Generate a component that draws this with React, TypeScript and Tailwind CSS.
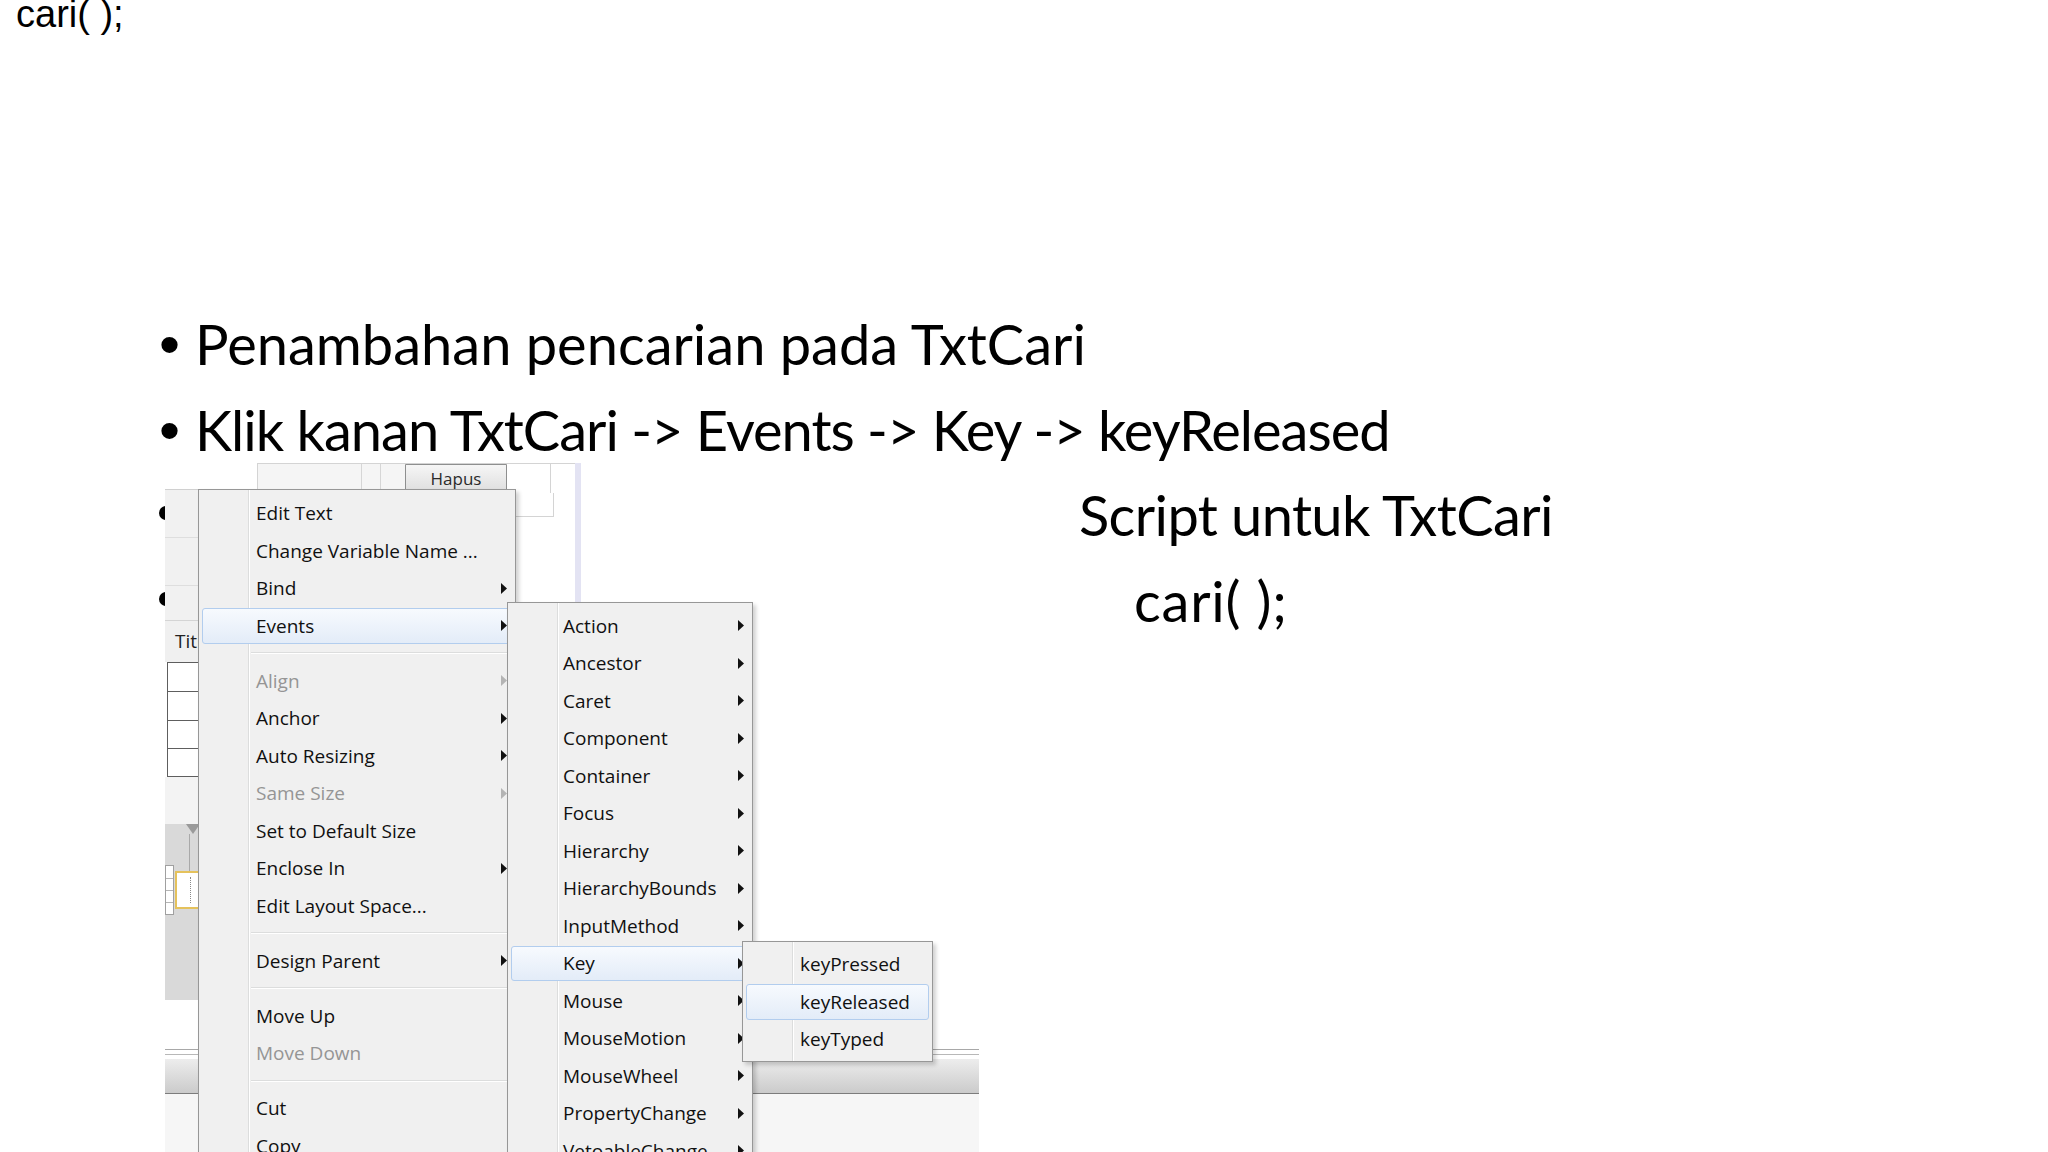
import React from "react";

type Item = { label: string; arrow?: boolean; disabled?: boolean; hl?: boolean } | "sep";

function Arrow({ disabled }: { disabled?: boolean }) {
  return (
    <svg width="6" height="11" viewBox="0 0 6 11" className="relative shrink-0">
      <path d="M0 0L6 5.5L0 11Z" fill={disabled ? "#b4b4b4" : "#111"} />
    </svg>
  );
}

function Menu({ items, className, textPad }: { items: Item[]; className: string; textPad: string }) {
  return (
    <div
      className={`absolute flex flex-col border border-[#979797] bg-[linear-gradient(to_right,#f0f0f0_49px,#dcdddd_49px,#dcdddd_50px,#ffffff_50px,#ffffff_51px,#f0f0f0_51px)] shadow-[3px_3px_4px_rgba(0,0,0,0.18)] font-['Open_Sans',sans-serif] text-[19px] ${className}`}
    >
      {items.map((it, i) =>
        it === "sep" ? (
          <div key={i} className="h-[17.5px] shrink-0 flex flex-col justify-center pl-[52px] pr-[2px]">
            <div className="h-px bg-[#dcdddd]" />
            <div className="h-px bg-white" />
          </div>
        ) : (
          <div key={i} className={`relative h-[37.5px] shrink-0 flex items-center pr-[8px] ${textPad}`}>
            {it.hl && (
              <div className="absolute top-[1px] bottom-[1px] left-[3px] right-[3px] rounded-[3px] border border-[#b2cdee] bg-linear-to-b from-[#f7fafe] to-[#e3ecf8]" />
            )}
            <span className={`relative flex-1 whitespace-nowrap ${it.disabled ? "text-[#959595]" : "text-[#101010]"}`}>
              {it.label}
            </span>
            {it.arrow && <Arrow disabled={it.disabled} />}
          </div>
        )
      )}
    </div>
  );
}

const mainItems: Item[] = [
  { label: "Edit Text" },
  { label: "Change Variable Name ..." },
  { label: "Bind", arrow: true },
  { label: "Events", arrow: true, hl: true },
  "sep",
  { label: "Align", arrow: true, disabled: true },
  { label: "Anchor", arrow: true },
  { label: "Auto Resizing", arrow: true },
  { label: "Same Size", arrow: true, disabled: true },
  { label: "Set to Default Size" },
  { label: "Enclose In", arrow: true },
  { label: "Edit Layout Space..." },
  "sep",
  { label: "Design Parent", arrow: true },
  "sep",
  { label: "Move Up" },
  { label: "Move Down", disabled: true },
  "sep",
  { label: "Cut" },
  { label: "Copy" },
  { label: "Paste" },
];

const eventItems: Item[] = [
  "Action",
  "Ancestor",
  "Caret",
  "Component",
  "Container",
  "Focus",
  "Hierarchy",
  "HierarchyBounds",
  "InputMethod",
  "Key",
  "Mouse",
  "MouseMotion",
  "MouseWheel",
  "PropertyChange",
  "VetoableChange",
].map((l) => ({ label: l, arrow: true, hl: l === "Key" }));

const keyItems: Item[] = [
  { label: "keyPressed" },
  { label: "keyReleased", hl: true },
  { label: "keyTyped" },
];

function LeftStrip() {
  return (
    <div className="w-[40px] shrink-0 flex flex-col">
      <div className="h-[26px] bg-white" />
      <div className="h-[131px] flex flex-col bg-[#f1f1f1] border-t border-[#d0d0d0]">
        <div className="h-[48px] border-b border-[#dedede]" />
        <div className="h-[48px] border-b border-[#dedede]" />
      </div>
      <div className="h-[42px] bg-[#f0f0f0] border-t border-[#d4d4d4] flex items-center pl-[10px] font-['Open_Sans',sans-serif] text-[19px] text-[#222] overflow-hidden whitespace-nowrap">
        Title
      </div>
      <div className="h-[115px] ml-[2px] bg-white border border-[#5e5e5e] flex flex-col">
        <div className="h-[29px] border-b border-[#5e5e5e]" />
        <div className="h-[29px] border-b border-[#5e5e5e]" />
        <div className="h-[28px] border-b border-[#5e5e5e]" />
      </div>
      <div className="h-[47px] bg-[#f3f3f3]" />
      <div className="h-[176px] bg-[#d9d9d9] flex flex-col">
        <div className="flex pl-[21px]">
          <svg width="14" height="10" viewBox="0 0 14 10">
            <path d="M0 0H14L7 10Z" fill="#9a9a9a" />
          </svg>
        </div>
        <div className="flex">
          <div className="w-[12px] mt-[31px] h-[50px] bg-white border border-[#a0a0a0] flex flex-col justify-around py-[6px]">
            <div className="h-px bg-[#b5b5b5]" />
            <div className="h-px bg-[#b5b5b5]" />
            <div className="h-px bg-[#b5b5b5]" />
          </div>
          <div className="flex flex-col items-start">
            <div className="ml-[15px] w-px h-[37px] bg-[#a9a9a9]" />
            <div className="ml-[1px] w-[30px] h-[38px] bg-white border-2 border-[#e5c25c] flex justify-center pt-[4px]">
              <div className="w-0 h-[26px] border-l border-dotted border-[#888]" />
            </div>
          </div>
        </div>
      </div>
      <div className="flex-1 bg-white" />
    </div>
  );
}

function TopPanel() {
  return (
    <div className="w-[324px] shrink-0 flex">
      <div className="flex-1 flex flex-col">
        <div className="h-[30px] flex bg-[#f5f5f5] border-l border-t border-[#d4d4d4]">
          <div className="w-[104px] border-r border-[#d6d6d6]" />
          <div className="w-[19px] border-r border-[#d6d6d6]" />
          <div className="w-[24px]" />
          <div className="w-[102px] rounded-b-[3px] border border-[#8e8f8f] bg-linear-to-b from-[#f6f6f6] to-[#dedede] flex items-center justify-center font-['Open_Sans',sans-serif] text-[17px] text-[#2a2a2a]">
            Hapus
          </div>
          <div className="w-[44px] bg-white border-r border-[#d4d4d4]" />
          <div className="flex-1 bg-white" />
        </div>
        <div className="flex">
          <div className="w-[259px]" />
          <div className="w-[38px] h-[24px] border-r border-b border-[#d4d4d4]" />
        </div>
      </div>
      <div className="w-[6px] h-[139px] bg-[#e3e3f3]" />
    </div>
  );
}

function Picture() {
  return (
    <div className="ml-[159px] w-[820px] h-[689px] shrink-0 flex">
      <div className="w-[6px] shrink-0 flex flex-col overflow-hidden">
        <div className="mt-[43px] w-[14px] h-[14px] shrink-0 rounded-full bg-black" />
        <div className="mt-[72px] w-[14px] h-[14px] shrink-0 rounded-full bg-black" />
      </div>
      <div className="relative w-[814px] h-[689px] overflow-hidden bg-white flex flex-col">
        <div className="h-[586px] shrink-0 flex">
          <LeftStrip />
          <div className="w-[52px] shrink-0" />
          <TopPanel />
        </div>
        <div className="h-px bg-[#a8a8a8]" />
        <div className="h-[4px]" />
        <div className="h-px bg-[#b8b8b8]" />
        <div className="h-[4px]" />
        <div className="h-[35px] shrink-0 bg-linear-to-b from-[#ededed] to-[#cbcbcb] border-b border-[#7c7c7c]" />
        <div className="flex-1 bg-[#f6f6f6]" />

        <Menu items={mainItems} textPad="pl-[57px]" className="left-[33px] top-[26px] w-[318px] pt-[4.5px]" />
        <Menu items={eventItems} textPad="pl-[55px]" className="left-[342px] top-[139px] w-[246px] pt-[4px]" />
        <Menu items={keyItems} textPad="pl-[57px]" className="left-[577px] top-[478px] w-[191px] h-[121px] pt-[3.5px]" />
      </div>
    </div>
  );
}

export default function App() {
  return (
    <div className="w-[2048px] h-[1152px] bg-white overflow-hidden flex flex-col">
      <div className="pl-[16px] mt-[-5px] h-[38px] text-[38px] leading-[38px] text-black font-['Liberation_Sans',Arial,sans-serif]">
        cari( );
      </div>
      <ul className="mt-[268px] flex flex-col font-['Lato',sans-serif] text-[56px] leading-[86px] text-black">
        <li className="flex items-baseline">
          <span className="ml-[159px] w-[36px] shrink-0 leading-none font-['Liberation_Sans',Arial,sans-serif] text-[60px]">•</span>
          <span className="whitespace-nowrap">Penambahan pencarian pada TxtCari</span>
        </li>
        <li className="flex items-baseline">
          <span className="ml-[159px] w-[36px] shrink-0 leading-none font-['Liberation_Sans',Arial,sans-serif] text-[60px]">•</span>
          <span className="whitespace-nowrap tracking-[-1px]">Klik kanan TxtCari -&gt; Events -&gt; Key -&gt; keyReleased</span>
        </li>
      </ul>
      <div className="flex -mt-[10px]">
        <Picture />
        <div className="ml-[100px] mt-[9px] flex flex-col font-['Lato',sans-serif] text-[56px] leading-[86px] text-black">
          <div className="whitespace-nowrap tracking-[-0.6px]">Script untuk TxtCari</div>
          <div className="pl-[55px] whitespace-nowrap tracking-[0.8px]">cari( );</div>
        </div>
      </div>
    </div>
  );
}
